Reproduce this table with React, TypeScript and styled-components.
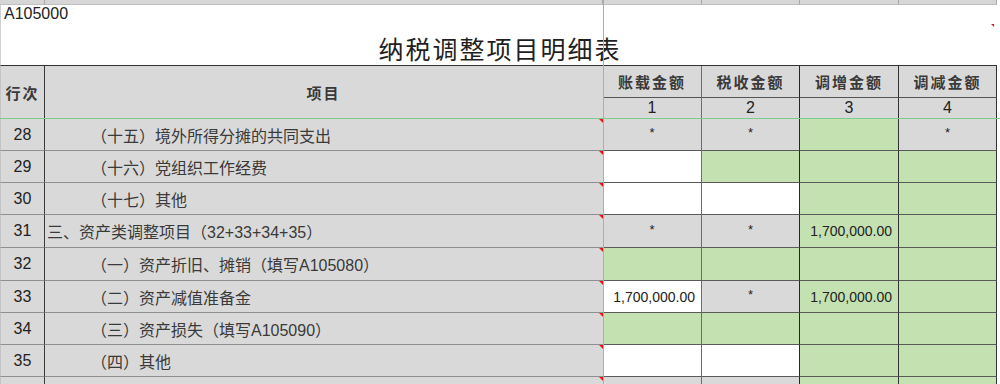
import React from "react";
import styled, { createGlobalStyle, css } from "styled-components";

const COLS = "45px 558px 99px 98px 99px 98px";
const FONT = `"Liberation Sans", "Noto Sans CJK SC", sans-serif`;

const GlobalStyle = createGlobalStyle`
  html, body {
    margin: 0;
    padding: 0;
    background: #ffffff;
  }
  * {
    box-sizing: border-box;
  }
`;

const Sheet = styled.div`
  position: relative;
  width: 1000px;
  height: 384px;
  overflow: hidden;
  background: #ffffff;
  font-family: ${FONT};
  color: #333;
`;

const Strip = styled.div`
  display: grid;
  grid-template-columns: ${COLS};
  height: 5px;
`;

const StripCell = styled.div`
  background: #d6d6d6;
  border-right: 1px solid #a8a8a8;
  border-bottom: 1px solid #c0c0c0;
`;

const CodeRow = styled.div`
  height: 18px;
  width: 997px;
  padding-left: 3px;
  font-size: 16px;
  line-height: 18px;
  color: #222;
  border-left: 1px solid #d0d0d0;
`;

const TitleRow = styled.div`
  position: relative;
  height: 43px;
  width: 997px;
  display: flex;
  align-items: flex-end;
  justify-content: center;
  padding-bottom: 4px;
  border-bottom: 1px solid #333;
  border-left: 1px solid #d0d0d0;
`;

const Title = styled.h1`
  margin: 0;
  font-family: "Noto Sans CJK SC", sans-serif;
  font-weight: 400;
  font-size: 25px;
  line-height: 25px;
  letter-spacing: 2px;
  color: #1f1f1f;
  padding-left: 2px;
`;

const HeadGrid = styled.div`
  display: grid;
  grid-template-columns: ${COLS};
  grid-template-rows: 32px 21px;
  width: 997px;
`;

const HeadCell = styled.div<{ $rows?: string; $sub?: boolean; $line?: string; $edge?: boolean }>`
  grid-row: ${(p) => p.$rows || "auto"};
  display: flex;
  align-items: center;
  justify-content: center;
  background: #d9d9d9;
  border-left: ${(p) => (p.$edge ? "1px solid #c4c4c4" : "none")};
  border-right: 1px solid ${(p) => p.$line || "#3a3a3a"};
  border-bottom: 1px solid ${(p) => (p.$sub ? "#d9d9d9" : "#555")};
  ${(p) =>
    p.$sub
      ? css`
          font-size: 16px;
          color: #222;
        `
      : css`
          font-size: 15px;
          font-weight: 700;
          letter-spacing: 2px;
          color: #3a3a3a;
        `}
`;

const Row = styled.div<{ $h: number }>`
  display: grid;
  grid-template-columns: ${COLS};
  height: ${(p) => p.$h}px;
  width: 997px;
`;

const NumCell = styled.div`
  display: flex;
  align-items: center;
  justify-content: center;
  background: #d9d9d9;
  border-left: 1px solid #c4c4c4;
  border-right: 1px solid #3a3a3a;
  border-bottom: 1px solid #8f8f8f;
  font-size: 16px;
  color: #222;
`;

const ItemCell = styled.div<{ $indent: number; $note?: boolean }>`
  position: relative;
  display: flex;
  align-items: center;
  padding-left: ${(p) => p.$indent}px;
  background: #d9d9d9;
  border-bottom: 1px solid #8f8f8f;
  font-size: 16px;
  color: #3a3a3a;
  white-space: nowrap;

  ${(p) =>
    p.$note &&
    css`
      &::after {
        content: "";
        position: absolute;
        top: 0;
        right: 0;
        border-top: 4px solid #e8141a;
        border-left: 4px solid transparent;
      }
    `}
`;

type Fill = "gray" | "white" | "green";

const FILLS: Record<Fill, string> = {
  gray: "#d9d9d9",
  white: "#ffffff",
  green: "#c4e1b2",
};

const ValueCell = styled.div<{ $fill: Fill; $line: string; $num?: boolean }>`
  display: flex;
  align-items: center;
  justify-content: ${(p) => (p.$num ? "flex-end" : "center")};
  padding-right: ${(p) => (p.$num ? 6 : 0)}px;
  background: ${(p) => FILLS[p.$fill]};
  border-right: 1px solid ${(p) => p.$line};
  border-bottom: 1px solid #5a5a5a;
  font-size: ${(p) => (p.$num ? 14 : 13)}px;
  color: #222;
`;

const Star = styled.span`
  display: block;
  margin-top: -4px;
`;

const FreezeV = styled.div`
  position: absolute;
  top: 0;
  bottom: 0;
  left: 603px;
  width: 1px;
  background: #7ccc8e;
`;

const FreezeH = styled.div`
  position: absolute;
  left: 0;
  right: 0;
  top: 118px;
  height: 1px;
  background: #7ccc8e;
`;

const CornerMark = styled.span`
  position: absolute;
  top: 1px;
  right: 3px;
  border-top: 3px solid #e8141a;
  border-left: 3px solid transparent;
`;

const LINES = ["#6e6e6e", "#262626", "#333333", "#333333"];

interface Item {
  no: string;
  text: string;
  indent: number;
  h: number;
  cells: [Fill, string][];
}

const rows: Item[] = [
  {
    no: "28",
    text: "（十五）境外所得分摊的共同支出",
    indent: 46,
    h: 32,
    cells: [["gray", "*"], ["gray", "*"], ["green", ""], ["gray", "*"]],
  },
  {
    no: "29",
    text: "（十六）党组织工作经费",
    indent: 46,
    h: 32,
    cells: [["white", ""], ["green", ""], ["green", ""], ["green", ""]],
  },
  {
    no: "30",
    text: "（十七）其他",
    indent: 46,
    h: 32,
    cells: [["white", ""], ["white", ""], ["green", ""], ["green", ""]],
  },
  {
    no: "31",
    text: "三、资产类调整项目（32+33+34+35）",
    indent: 2,
    h: 33,
    cells: [["gray", "*"], ["gray", "*"], ["green", "1,700,000.00"], ["green", ""]],
  },
  {
    no: "32",
    text: "（一）资产折旧、摊销（填写A105080）",
    indent: 46,
    h: 33,
    cells: [["green", ""], ["green", ""], ["green", ""], ["green", ""]],
  },
  {
    no: "33",
    text: "（二）资产减值准备金",
    indent: 46,
    h: 32,
    cells: [["white", "1,700,000.00"], ["gray", "*"], ["green", "1,700,000.00"], ["green", ""]],
  },
  {
    no: "34",
    text: "（三）资产损失（填写A105090）",
    indent: 46,
    h: 32,
    cells: [["green", ""], ["green", ""], ["green", ""], ["green", ""]],
  },
  {
    no: "35",
    text: "（四）其他",
    indent: 46,
    h: 32,
    cells: [["white", ""], ["white", ""], ["green", ""], ["green", ""]],
  },
  {
    no: "",
    text: "",
    indent: 46,
    h: 20,
    cells: [["gray", ""], ["gray", ""], ["green", ""], ["green", ""]],
  },
];

const heads = ["账载金额", "税收金额", "调增金额", "调减金额"];

function App() {
  return (
    <>
      <GlobalStyle />
      <Sheet>
        <Strip>
          {COLS.split(" ").map((_, i) => (
            <StripCell key={i} />
          ))}
        </Strip>
        <CodeRow>A105000</CodeRow>
        <TitleRow>
          <Title>纳税调整项目明细表</Title>
          <CornerMark />
        </TitleRow>
        <HeadGrid>
          <HeadCell $rows="1 / 3" $edge>
            行次
          </HeadCell>
          <HeadCell $rows="1 / 3" $line="#d9d9d9">
            项目
          </HeadCell>
          {heads.map((h, i) => (
            <HeadCell key={h} $rows="1" $line={LINES[i]}>
              {h}
            </HeadCell>
          ))}
          {heads.map((h, i) => (
            <HeadCell key={h + "n"} $rows="2" $sub $line={LINES[i]}>
              {i + 1}
            </HeadCell>
          ))}
        </HeadGrid>
        {rows.map((r, idx) => (
          <Row key={idx} $h={r.h}>
            <NumCell>{r.no}</NumCell>
            <ItemCell $indent={r.indent} $note>
              {r.text}
            </ItemCell>
            {r.cells.map(([fill, val], i) => (
              <ValueCell key={i} $fill={fill} $line={LINES[i]} $num={val.length > 1}>
                {val === "*" ? <Star>*</Star> : val}
              </ValueCell>
            ))}
          </Row>
        ))}
        <FreezeV />
        <FreezeH />
      </Sheet>
    </>
  );
}

export default App;
